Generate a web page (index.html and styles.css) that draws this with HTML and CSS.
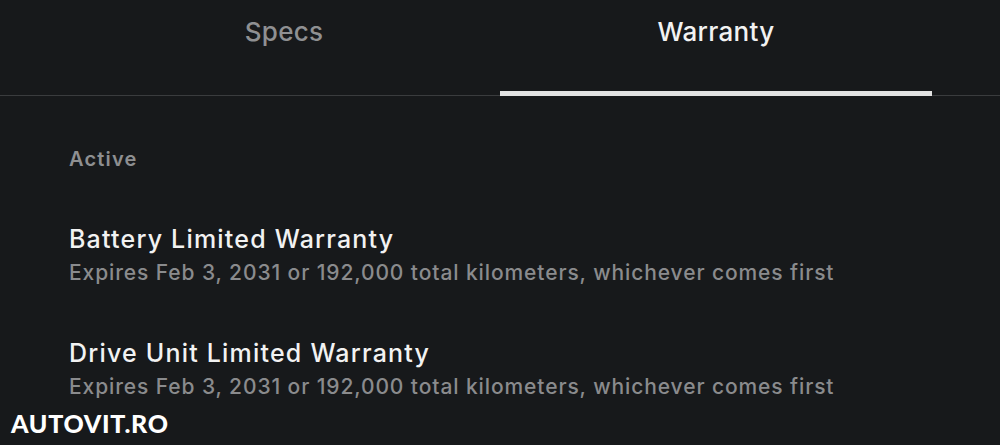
FILE: index.html
```html
<!DOCTYPE html>
<html lang="en">
<head>
    <meta charset="UTF-8">
    <meta name="viewport" content="width=device-width, initial-scale=1.0">
    <title>Warranty</title>
    <link rel="stylesheet" href="styles.css">
</head>
<body>
    <div class="tabs">
        <div class="tab">Specs</div>
        <div class="tab active">Warranty</div>
    </div>

    <div class="content">
        <div class="section-title">Active</div>

        <div class="item">
            <div class="item-title">Battery Limited Warranty</div>
            <div class="item-sub">Expires Feb 3, 2031 or 192,000 total kilometers, whichever comes first</div>
        </div>

        <div class="item">
            <div class="item-title">Drive Unit Limited Warranty</div>
            <div class="item-sub">Expires Feb 3, 2031 or 192,000 total kilometers, whichever comes first</div>
        </div>
    </div>

    <div class="watermark">AUTOVIT.RO</div>
</body>
</html>
```

FILE: styles.css
```css
body {
    font-family: Inter, "Noto Sans", sans-serif;
    margin: 0;
    padding: 0;
    background-color: #17191b;
    color: #eeeeee;
    height: 445px;
    overflow: hidden;
    position: relative;
}

.tabs {
    display: flex;
    padding: 0 68px;
    height: 95px;
    border-bottom: 1px solid #3a3c3e;
}

.tab {
    flex: 1;
    text-align: center;
    font-size: 26px;
    font-weight: 500;
    letter-spacing: 0.3px;
    color: #8f9092;
    padding-top: 16px;
    box-sizing: border-box;
}

.tab.active {
    color: #f2f2f2;
    border-bottom: 5px solid #e2e2e2;
    margin-bottom: -1px;
}

.content {
    padding: 51px 69px 0;
}

.section-title {
    font-size: 20px;
    font-weight: 600;
    letter-spacing: 1.2px;
    color: #8e8f91;
    margin-bottom: 52px;
}

.item {
    margin-bottom: 49px;
}

.item-title {
    font-size: 25px;
    font-weight: 500;
    letter-spacing: 1.2px;
    color: #f2f2f2;
    line-height: 32px;
}

.item-sub {
    font-size: 21px;
    font-weight: 500;
    letter-spacing: 0.9px;
    color: #8a8b8d;
    line-height: 30px;
    margin-top: 3px;
}

.watermark {
    position: absolute;
    left: 11px;
    top: 408px;
    font-family: "Lato", sans-serif;
    font-weight: 900;
    font-size: 25px;
    letter-spacing: 0.7px;
    color: #ffffff;
}
```
